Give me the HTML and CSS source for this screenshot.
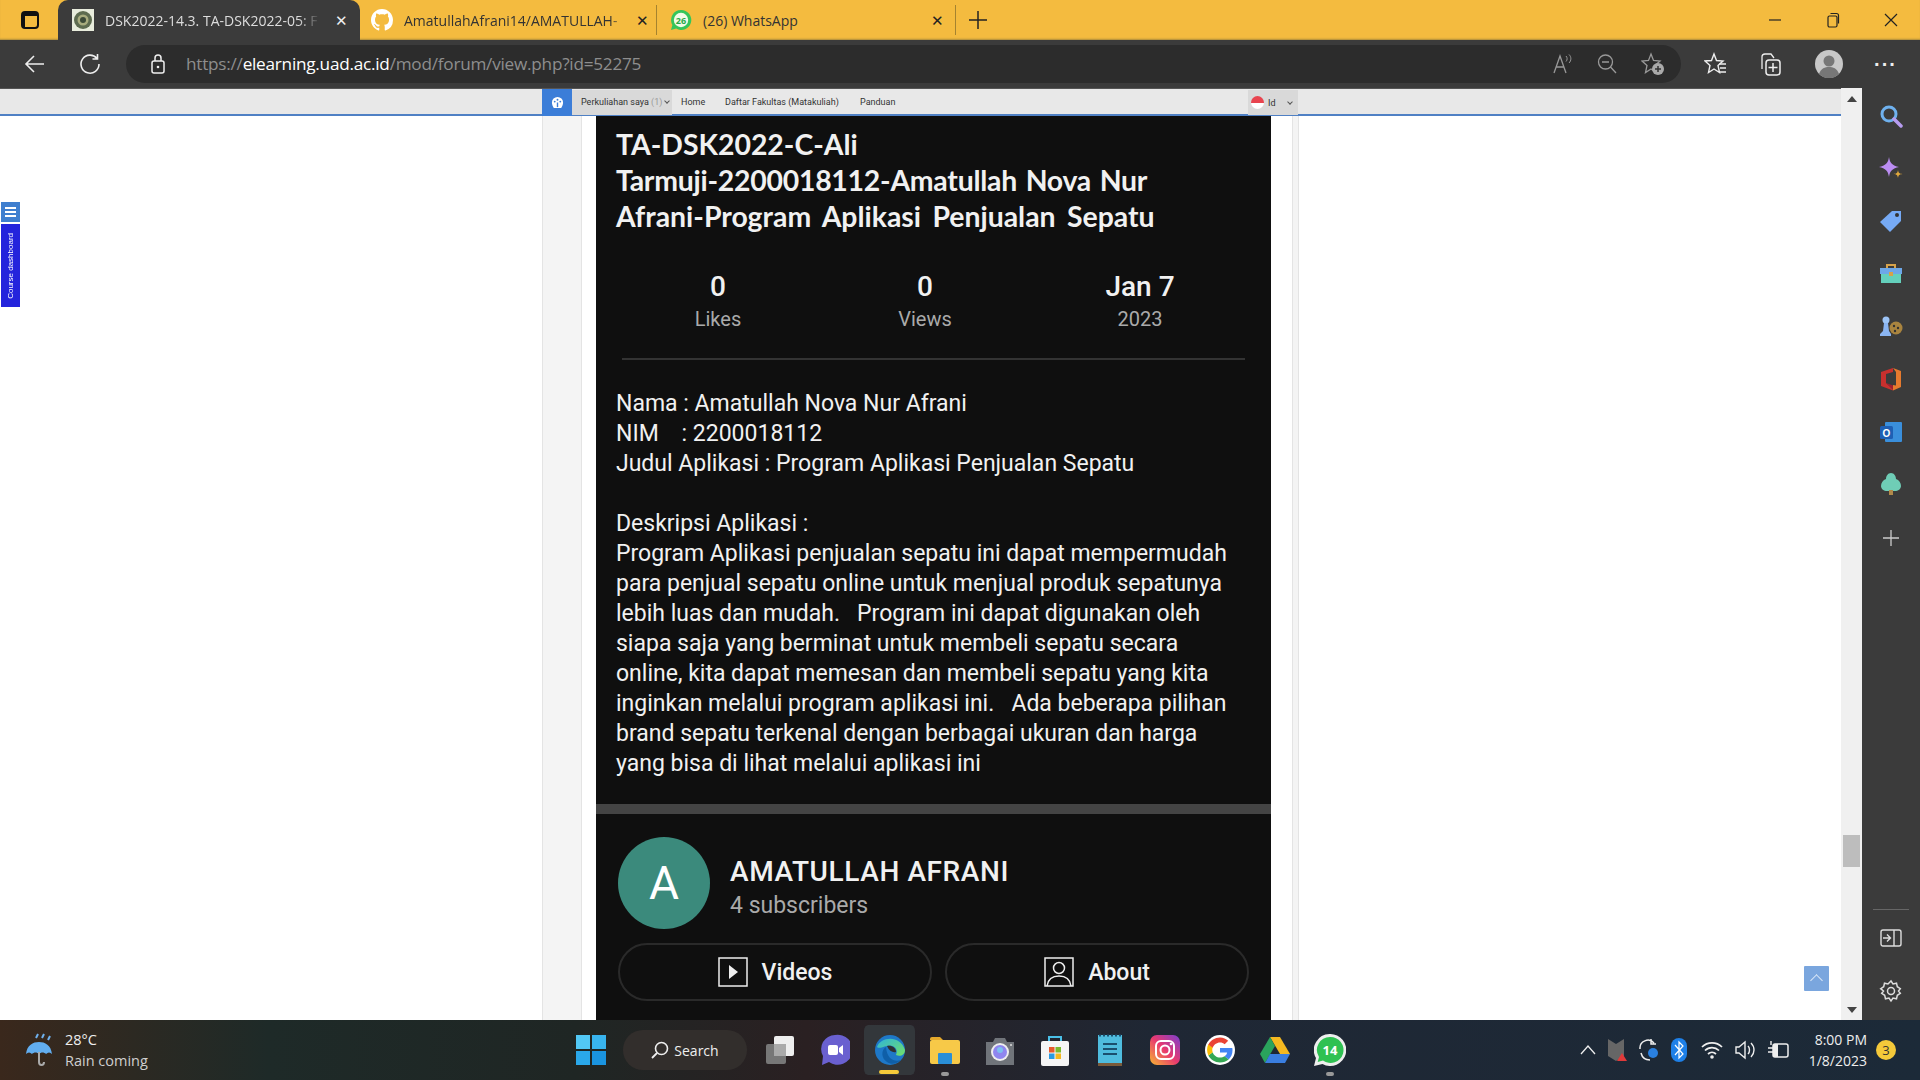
FILE: index.html
```html
<!DOCTYPE html>
<html>

<head>
    <title>DSK2022-14.3. TA-DSK2022-05</title>
    <link rel="stylesheet" href="styles.css">
</head>

<body>
    <header class="tabbar">
        <svg class="tabs-btn" width="20" height="20" viewBox="0 0 20 20"><rect x="2" y="2" width="16" height="16" rx="3" fill="none" stroke="#111" stroke-width="2"/><rect x="2" y="2" width="16" height="4" fill="#111"/><rect x="2" y="2" width="3" height="16" fill="#111"/></svg>
        <div class="tab tab-active">
            <svg class="fav" width="22" height="22" viewBox="0 0 22 22"><rect width="22" height="22" fill="#e8ecdc"/><circle cx="11" cy="11" r="9" fill="#5d6b4f"/><circle cx="11" cy="11" r="5.500" fill="#a8ac7e"/><circle cx="11" cy="11" r="3" fill="#3c4a38"/></svg>
            <span class="tab-title">DSK2022-14.3. TA-DSK2022-05: F</span>
            <span class="tab-x">✕</span>
        </div>
        <div class="tab tab-gh">
            <svg class="fav" width="22" height="22" viewBox="0 0 16 16"><path fill="#fff" d="M8 0C3.58 0 0 3.58 0 8c0 3.54 2.29 6.53 5.47 7.59.4.07.55-.17.55-.38 0-.19-.01-.82-.01-1.49-2.01.37-2.53-.49-2.69-.94-.09-.23-.48-.94-.82-1.13-.28-.15-.68-.52-.01-.53.63-.01 1.08.58 1.23.82.72 1.21 1.87.87 2.33.66.07-.52.28-.87.51-1.07-1.78-.2-3.64-.89-3.64-3.95 0-.87.31-1.59.82-2.15-.08-.2-.36-1.02.08-2.12 0 0 .67-.21 2.2.82.64-.18 1.32-.27 2-.27s1.36.09 2 .27c1.53-1.04 2.2-.82 2.2-.82.44 1.1.16 1.92.08 2.12.51.56.82 1.27.82 2.15 0 3.07-1.87 3.75-3.65 3.95.29.25.54.73.54 1.48 0 1.07-.01 1.93-.01 2.2 0 .21.15.46.55.38A8 8 0 0 0 16 8c0-4.42-3.58-8-8-8z"/></svg>
            <span class="tab-title">AmatullahAfrani14/AMATULLAH-</span>
            <span class="tab-x">✕</span>
        </div>
        <div class="tab tab-wa">
            <svg class="fav" width="22" height="22" viewBox="0 0 22 22"><path fill="#35c55a" d="M11 1a10 10 0 0 0-8.600 15L1 21l5.200-1.400A10 10 0 1 0 11 1z"/><circle cx="11" cy="11" r="7.200" fill="#f3fbe8"/><text x="11" y="14.500" class="fav-num">26</text></svg>
            <span class="tab-title">(26) WhatsApp</span>
            <span class="tab-x">✕</span>
        </div>
        <svg class="new-tab" width="18" height="18" viewBox="0 0 18 18"><path d="M9 0v18M0 9h18" stroke="#222" stroke-width="1.500"/></svg>
        <div class="win-ctrls">
            <svg width="14" height="14" viewBox="0 0 14 14"><path d="M1 7h12" stroke="#222" stroke-width="1.200"/></svg>
            <svg width="14" height="16" viewBox="0 0 14 16"><rect x="2" y="4" width="9" height="11" rx="1.500" fill="none" stroke="#222" stroke-width="1.200"/><path d="M4.500 1.500h6a2 2 0 0 1 2 2v8" fill="none" stroke="#222" stroke-width="1.200"/></svg>
            <svg width="14" height="14" viewBox="0 0 14 14"><path d="M1 1l12 12M13 1L1 13" stroke="#222" stroke-width="1.200"/></svg>
        </div>
    </header>

    <nav class="toolbar">
        <svg class="nav-btn" width="22" height="22" viewBox="0 0 22 22"><path d="M20 11H2M10 3l-8 8 8 8" fill="none" stroke="#eee" stroke-width="1.600"/></svg>
        <svg class="nav-btn" width="22" height="22" viewBox="0 0 22 22"><path d="M18 5.500A9 9 0 1 0 20 11M18.500 1v5h-5" fill="none" stroke="#eee" stroke-width="1.600"/></svg>
        <div class="addr">
            <svg width="16" height="20" viewBox="0 0 16 20"><rect x="2" y="7" width="12" height="12" rx="2" fill="none" stroke="#eee" stroke-width="1.500"/><path d="M5 7V4a3 3 0 0 1 6 0v3" fill="none" stroke="#eee" stroke-width="1.500"/><circle cx="8" cy="13" r="1.300" fill="#eee"/></svg>
            <span class="url"><span class="dim">https://</span>elearning.uad.ac.id<span class="dim">/mod/forum/view.php?id=52275</span></span>
            <div class="addr-icons">
                <svg width="20" height="22" viewBox="0 0 20 22"><path d="M1 20L7 3l6 17M3.500 14h7" fill="none" stroke="#999" stroke-width="1.300"/><path d="M13 3c1.500 1.500 1.500 4 0 5.500M16 1.500c2.500 2.500 2.500 6 0 8.500" fill="none" stroke="#999" stroke-width="1"/></svg>
                <svg width="20" height="22" viewBox="0 0 20 22"><circle cx="8.500" cy="9" r="7" fill="none" stroke="#999" stroke-width="1.300"/><path d="M5 9h7M13.500 14l5.500 6" stroke="#999" stroke-width="1.300"/></svg>
                <svg width="24" height="24" viewBox="0 0 24 24"><path d="M10 2l2.500 6.500L19 9l-5 4.500 1.500 7L10 17l-5.500 3.500 1.500-7L1 9l6.500-.5z" fill="none" stroke="#999" stroke-width="1.300"/><circle cx="17" cy="17" r="6" fill="#aaa"/><path d="M17 14v6M14 17h6" stroke="#333" stroke-width="1.500"/></svg>
            </div>
        </div>
        <div class="tool-icons">
            <svg width="24" height="24" viewBox="0 0 24 24"><path d="M10 2l2.500 6.500L19 9l-5 4.500 1.500 7L10 17l-5.500 3.500 1.500-7L1 9l6.500-.5z" fill="none" stroke="#eee" stroke-width="1.400"/><path d="M15 12h7M16 16h6M15 20h7" stroke="#eee" stroke-width="1.400"/></svg>
            <svg width="24" height="26" viewBox="0 0 24 26"><path d="M4 18V6a3 3 0 0 1 3-3h6l3 4" fill="none" stroke="#eee" stroke-width="1.300"/><rect x="8" y="9" width="14" height="15" rx="3" fill="none" stroke="#eee" stroke-width="1.500"/><path d="M15 12v9M10.500 16.500h9" stroke="#eee" stroke-width="1.500"/></svg>
            <svg class="tool-avatar" width="28" height="28" viewBox="0 0 28 28"><circle cx="14" cy="14" r="14" fill="#c8c8c8"/><circle cx="14" cy="11" r="5.500" fill="#777"/><path d="M4 24c2-6 6-7 10-7s8 1 10 7a14 14 0 0 1-20 0z" fill="#777"/></svg>
            <span class="more">···</span>
        </div>
    </nav>

    <div class="main">
        <div class="page">
            <div class="menu-row">
                <div class="menu-gap"></div>
                <div class="menu">
                    <div class="home-btn">
                        <svg width="13" height="13" viewBox="0 0 14 14"><path fill="#fff" d="M7 1a6 6 0 0 0-6 6c0 2.500 1 4 2 6h8c1-2 2-3.500 2-6a6 6 0 0 0-6-6z"/><circle cx="4" cy="6" r="1" fill="#3b7dd8"/><circle cx="7" cy="4" r="1" fill="#3b7dd8"/><circle cx="10" cy="6" r="1" fill="#3b7dd8"/><path d="M7 7v5" stroke="#3b7dd8" stroke-width="1.500"/></svg>
                    </div>
                    <div class="menu-item menu-open">Perkuliahan saya <span class="count">(1)</span><span class="caret"></span></div>
                    <div class="menu-item">Home</div>
                    <div class="menu-item">Daftar Fakultas (Matakuliah)</div>
                    <div class="menu-item">Panduan</div>
                    <div class="lang">
                        <span class="flag"></span>
                        <span>Id</span>
                        <span class="caret"></span>
                    </div>
                </div>
            </div>
            <div class="content">
                <div class="left-gap"></div>
                <div class="column">
                    <div class="strip"></div>
                    <div class="post-wrap">
                        <article class="post">
                            <h1 class="title">TA-DSK2022-C-Ali<br><span class="title-tight">Tarmuji-2200018112-Amatullah Nova Nur</span><br><span class="title-wide">Afrani-Program Aplikasi Penjualan Sepatu</span></h1>
                            <div class="stats">
                                <div class="stat stat-likes"><b>0</b><span>Likes</span></div>
                                <div class="stat stat-views"><b>0</b><span>Views</span></div>
                                <div class="stat stat-date"><b>Jan 7</b><span>2023</span></div>
                            </div>
                            <hr class="divider">
                            <p class="desc">Nama : Amatullah Nova Nur Afrani<br>NIM &nbsp;&nbsp; : 2200018112<br>Judul Aplikasi : Program Aplikasi Penjualan Sepatu<br><br>Deskripsi Aplikasi :<br>Program Aplikasi penjualan sepatu ini dapat mempermudah<br>para penjual sepatu online untuk menjual produk sepatunya<br>lebih luas dan mudah. &nbsp; Program ini dapat digunakan oleh<br>siapa saja yang berminat untuk membeli sepatu secara<br>online, kita dapat memesan dan membeli sepatu yang kita<br>inginkan melalui program aplikasi ini. &nbsp; Ada beberapa pilihan<br>brand sepatu terkenal dengan berbagai ukuran dan harga<br>yang bisa di lihat melalui aplikasi ini</p>
                            <div class="band"></div>
                            <div class="channel">
                                <div class="avatar">A</div>
                                <div class="chan-info">
                                    <div class="chan-name">AMATULLAH AFRANI</div>
                                    <div class="chan-subs">4 subscribers</div>
                                </div>
                            </div>
                            <div class="chan-btns">
                                <div class="pill pill-videos">
                                    <svg width="30" height="30" viewBox="0 0 30 30"><rect x="1" y="1" width="28" height="28" fill="none" stroke="#eee" stroke-width="1.500"/><path d="M11 8l9 7-9 7z" fill="#eee"/></svg>
                                    Videos
                                </div>
                                <div class="pill pill-about">
                                    <svg width="30" height="30" viewBox="0 0 30 30"><rect x="1" y="1" width="28" height="28" fill="none" stroke="#eee" stroke-width="1.500"/><circle cx="15" cy="11" r="5.500" fill="none" stroke="#eee" stroke-width="1.500"/><path d="M3 29c1-7 6-10 12-10s11 3 12 10" fill="none" stroke="#eee" stroke-width="1.500"/></svg>
                                    About
                                </div>
                            </div>
                        </article>
                    </div>
                    <div class="strip-right"></div>
                </div>
            </div>
            <div class="side-widget">
                <div class="side-toggle"><i></i><i></i><i></i></div>
                <div class="side-dash"><span>Course dashboard</span></div>
            </div>
            <div class="to-top"></div>
        </div>

        <div class="scrollbar">
            <div class="arrow-up"></div>
            <div class="thumb"></div>
            <div class="arrow-down"></div>
        </div>

        <aside class="sidebar">
            <svg width="24" height="24" viewBox="0 0 24 24"><circle cx="10" cy="10" r="7" fill="none" stroke="#6fb1ee" stroke-width="3"/><path d="M15 15l7 7" stroke="#b79cf0" stroke-width="3.500" stroke-linecap="round"/></svg>
            <svg width="24" height="24" viewBox="0 0 24 24"><path d="M10 0c.8 6 3.500 8.500 10 10-6.500 1.500-9.200 4-10 10-.8-6-3.500-8.500-10-10C6.500 8.500 9.200 6 10 0z" fill="#bb8df2"/><path d="M19 13c.5 3 1.200 3.600 4.500 4-3.300.4-4 1-4.500 4-.5-3-1.200-3.600-4.500-4 3.300-.4 4-1 4.500-4z" fill="#e0a83c"/></svg>
            <svg width="24" height="24" viewBox="0 0 24 24"><path d="M1 13L13 2h9v10L11 23z" fill="#76aaf5"/><circle cx="18" cy="6" r="2" fill="#333"/></svg>
            <svg width="24" height="24" viewBox="0 0 24 24"><path d="M8 6V3h8v3" fill="none" stroke="#d6a24a" stroke-width="2"/><rect x="1" y="6" width="22" height="6" fill="#6da7e8"/><rect x="2" y="12" width="20" height="9" fill="#64d0bc"/><rect x="10" y="10" width="4" height="4" fill="#d6a24a"/></svg>
            <svg width="24" height="24" viewBox="0 0 24 24"><circle cx="7" cy="6" r="3.500" fill="#9cc4f7"/><path d="M5 9h4l1 8 2 3v2H1v-2l3-3z" fill="#8ab5f2"/><circle cx="17" cy="14" r="6.500" fill="#a9843f"/><circle cx="15" cy="12" r="1.200" fill="#333"/><circle cx="19" cy="14" r="1.200" fill="#333"/><circle cx="16" cy="17" r="1.200" fill="#333"/></svg>
            <svg width="24" height="24" viewBox="0 0 24 24"><path d="M2 5l12-4v4L7 7v9l7 6.500v1L2 19z" fill="#c8302e"/><path d="M14 1l8 3v16l-8 3.500V18l3 .5V5z" fill="#e67a2e"/><path d="M7 16l7 2.500v4z" fill="#a02030"/></svg>
            <svg width="24" height="24" viewBox="0 0 24 24"><rect x="6" y="2" width="17" height="20" rx="1" fill="#3a8fdc"/><rect x="1" y="6" width="13" height="13" rx="1.500" fill="#1e5fb4"/><text x="7.500" y="16.500" class="outlook-o">O</text></svg>
            <svg width="24" height="24" viewBox="0 0 24 24"><path d="M12 1c3 0 5 3 5 6 3 1 5 4 5 7 0 3-3 5-6 5H8c-3 0-6-2-6-5 0-3 2-6 5-7 0-3 2-6 5-6z" fill="#6fcdb6"/><rect x="10" y="18" width="4" height="5" fill="#b08a4a"/></svg>
            <svg class="side-add" width="20" height="20" viewBox="0 0 20 20"><path d="M10 2v16M2 10h16" stroke="#ccc" stroke-width="1.300"/></svg>
            <div class="side-bottom">
                <hr class="side-rule">
                <svg width="22" height="20" viewBox="0 0 22 20"><rect x="1" y="2" width="20" height="16" rx="2" fill="none" stroke="#ddd" stroke-width="1.400"/><path d="M14 2v16M3 10h7M7 6.500l3.500 3.500L7 13.500" fill="none" stroke="#ddd" stroke-width="1.400"/></svg>
                <svg width="24" height="24" viewBox="0 0 24 24"><path fill="none" stroke="#ddd" stroke-width="1.500" d="M12 2l2 3 3.500-.8.800 3.500 3 2-1.800 2.300 1.800 2.300-3 2-.8 3.500-3.500-.8-2 3-2-3-3.500.8-.8-3.500-3-2 1.800-2.300L1.700 9.700l3-2 .8-3.500L9 5z"/><circle cx="12" cy="12" r="3.500" fill="none" stroke="#ddd" stroke-width="1.500"/></svg>
            </div>
        </aside>
    </div>

    <footer class="taskbar">
        <div class="weather">
            <svg width="32" height="36" viewBox="0 0 32 36"><path d="M2 22C3 13 9 10 15 10s12 3 13 12c-2-2-4-2-6 0-2-2-5-2-7 0-2-2-5-2-7 0-2-2-4-2-6 0z" fill="#62aef0"/><path d="M15 20v10c0 4 5 4 5 0" fill="none" stroke="#aaa" stroke-width="2"/><path d="M14 2l-2 4M20 2l-2 4M26 4l-2 4" stroke="#6fb1ee" stroke-width="2"/></svg>
            <div class="weather-txt">
                <div>28°C</div>
                <div class="weather-sub">Rain coming</div>
            </div>
        </div>
        <div class="apps">
            <svg width="30" height="30" viewBox="0 0 30 30"><rect width="14" height="14" fill="#52c8f5"/><rect x="16" width="14" height="14" fill="#38b4ee"/><rect y="16" width="14" height="14" fill="#2aa8ea"/><rect x="16" y="16" width="14" height="14" fill="#1a94e0"/></svg>
            <div class="search-pill">
                <svg width="18" height="18" viewBox="0 0 18 18"><circle cx="10.500" cy="7.500" r="6" fill="none" stroke="#eee" stroke-width="1.600"/><path d="M6 12l-5 5" stroke="#eee" stroke-width="1.800"/></svg>
                Search
            </div>
            <div class="app-slot">
                <svg width="32" height="32" viewBox="0 0 32 32"><rect x="2" y="10" width="20" height="20" rx="2" fill="#777"/><rect x="10" y="2" width="20" height="20" rx="2" fill="#eee"/><rect x="10" y="10" width="12" height="12" fill="#aaa"/></svg>
            </div>
            <div class="app-slot">
                <svg width="30" height="32" viewBox="0 0 30 32"><path d="M15 1a14 14 0 0 0-12 21l-1 9 7-3a15 15 0 1 0 6-27z" fill="#6a60d0"/><rect x="8" y="11" width="10" height="10" rx="2" fill="#fff"/><path d="M19 14l4-3v10l-4-3z" fill="#fff"/></svg>
            </div>
            <div class="app-slot app-edge">
                <svg width="32" height="32" viewBox="0 0 32 32"><defs><linearGradient id="edg" x1="0" y1="0" x2="1" y2="1"><stop offset="0" stop-color="#2fb4d8"/><stop offset="1" stop-color="#72e068"/></linearGradient></defs><circle cx="16" cy="16" r="15" fill="#1e78c8"/><path d="M3 13C6 3 26 0 31 16c0 5-5 7-9 5 3-6-3-11-9-9-5 1-8 3-10 1z" fill="url(#edg)"/><path d="M13 12c5-1 9 2 9 6-3 1-7-1-9-6z" fill="#2f3133"/><path d="M12 13c-5 3-5 11 1 15 4 3 10 2 14-2-6 2-14 0-15-13z" fill="#0f5fa8"/></svg>
                <span class="run-bar"></span>
            </div>
            <div class="app-slot">
                <svg width="32" height="28" viewBox="0 0 32 28"><path d="M1 3a2 2 0 0 1 2-2h8l3 3h-13z" fill="#e6a92c"/><rect x="1" y="4" width="30" height="24" rx="2" fill="#f7c948"/><rect x="9" y="17" width="14" height="11" rx="1" fill="#2a8fd8"/></svg>
                <span class="run-dot"></span>
            </div>
            <div class="app-slot">
                <svg width="32" height="30" viewBox="0 0 32 30"><path d="M2 7h7l2-4h10l2 4h7v23H2z" fill="#70747a"/><circle cx="16" cy="17" r="9" fill="#eee"/><circle cx="16" cy="17" r="7" fill="#8f86ee"/><circle cx="16" cy="15" r="3" fill="#7cc0f0"/><circle cx="27" cy="10" r="1" fill="#ddd"/></svg>
            </div>
            <div class="app-slot">
                <svg width="30" height="32" viewBox="0 0 30 32"><path d="M9 8V3h12v5" fill="none" stroke="#4ac0e8" stroke-width="2"/><rect x="1" y="7" width="28" height="25" rx="2" fill="#f5f5f5"/><rect x="9" y="13" width="5.500" height="5.500" fill="#e8592b"/><rect x="15.500" y="13" width="5.500" height="5.500" fill="#7ab92c"/><rect x="9" y="19.500" width="5.500" height="5.500" fill="#2a9ae0"/><rect x="15.500" y="19.500" width="5.500" height="5.500" fill="#f4b820"/></svg>
            </div>
            <div class="app-slot">
                <svg width="24" height="32" viewBox="0 0 24 32"><rect y="1" width="24" height="28" fill="#4fbcde"/><rect y="29" width="24" height="3" fill="#7a5a3a"/><path d="M1 1.500h22" stroke="#1a4f6e" stroke-width="2" stroke-dasharray="2 2"/><path d="M5 10h14M5 15h14M5 20h14" stroke="#1a4f6e" stroke-width="2.200"/></svg>
            </div>
            <div class="app-slot">
                <svg width="30" height="30" viewBox="0 0 30 30"><defs><linearGradient id="ig" x1="0" y1="1" x2="1" y2="0"><stop offset="0" stop-color="#f7b733"/><stop offset=".5" stop-color="#e8396f"/><stop offset="1" stop-color="#7a3fd0"/></linearGradient></defs><rect width="30" height="30" rx="7" fill="url(#ig)"/><rect x="6" y="6" width="18" height="18" rx="5" fill="none" stroke="#fff" stroke-width="2"/><circle cx="15" cy="15" r="4.500" fill="none" stroke="#fff" stroke-width="2"/><circle cx="21" cy="9" r="1.300" fill="#fff"/></svg>
            </div>
            <div class="app-slot">
                <svg width="30" height="30" viewBox="0 0 48 48"><circle cx="24" cy="24" r="24" fill="#fff"/><path fill="#4285f4" d="M44 24.500c0-1.500-.1-2.600-.4-3.800H24v7.400h11.500c-.5 2.500-2 4.600-4.300 6l6.600 5.100C41.700 35.600 44 30.500 44 24.500z"/><path fill="#34a853" d="M24 44c5.500 0 10-1.800 13.800-4.800l-6.600-5.100c-1.800 1.200-4.200 2-7.200 2-5.400 0-10-3.600-11.700-8.600l-6.900 5.300C8.800 39.400 15.800 44 24 44z"/><path fill="#fbbc05" d="M12.300 27.500c-.9-2.600-.9-5.400 0-8L5.400 14.200c-2.800 5.600-2.800 12 0 18.600z"/><path fill="#ea4335" d="M24 11.900c3 0 5.500 1 7.500 2.900l5.600-5.600C33.800 6.100 29.400 4 24 4 15.800 4 8.800 8.600 5.400 15.200l6.900 5.300C14 15.500 18.600 11.900 24 11.900z"/></svg>
            </div>
            <div class="app-slot">
                <svg width="30" height="28" viewBox="0 0 30 28"><path d="M10 1h10l10 17h-10z" fill="#f4b820"/><path d="M10 1L0 18l5 9 10-17z" fill="#2aa35c"/><path d="M5 27h20l5-9H10z" fill="#3a7ee0"/></svg>
            </div>
            <div class="app-slot">
                <svg width="32" height="32" viewBox="0 0 32 32"><path fill="#eee" d="M16 0a16 16 0 0 0-14 24L0 32l8.500-2A16 16 0 1 0 16 0z"/><path fill="#2fc152" d="M16 3a13 13 0 0 0-11 20l-1.300 5 5.300-1.400A13 13 0 1 0 16 3z"/><text x="16" y="21" class="wa-num">14</text></svg>
                <span class="run-dot"></span>
            </div>
        </div>
        <div class="tray">
            <svg width="16" height="10" viewBox="0 0 16 10"><path d="M1 9l7-8 7 8" fill="none" stroke="#eee" stroke-width="1.300"/></svg>
            <svg width="20" height="24" viewBox="0 0 20 24"><path d="M1 1l8 5 8-5v17l-8 5-8-5z" fill="#666"/><path d="M10 23l5-8 5 8z" fill="#e03a3a"/></svg>
            <svg width="22" height="24" viewBox="0 0 22 24"><path d="M2 11a8 8 0 0 1 14-6M13 1v5h5M3 15c1 4 3 7 9 7" fill="none" stroke="#eee" stroke-width="1.500"/><circle cx="15" cy="15" r="5" fill="#2a80e0"/></svg>
            <svg width="16" height="24" viewBox="0 0 16 24"><rect width="16" height="24" rx="8" fill="#1e80e8"/><path d="M4 7l8 9-4 4V4l4 4-8 9" fill="none" stroke="#fff" stroke-width="1.200"/></svg>
            <svg class="tray-wifi" width="22" height="20" viewBox="0 0 22 20"><path d="M1 7a14 14 0 0 1 20 0M4 10.500a10 10 0 0 1 14 0M7 14a6 6 0 0 1 8 0" fill="none" stroke="#eee" stroke-width="1.700"/><circle cx="11" cy="17" r="1.800" fill="#eee"/></svg>
            <svg width="22" height="20" viewBox="0 0 22 20"><path d="M2 7h3l6-5v16l-6-5H2z" fill="none" stroke="#eee" stroke-width="1.400"/><path d="M14 6c2 2 2 6 0 8M17 3c4 4 4 10 0 14" fill="none" stroke="#eee" stroke-width="1.400"/></svg>
            <svg width="22" height="20" viewBox="0 0 22 20"><rect x="6" y="4" width="15" height="13" rx="2" fill="none" stroke="#eee" stroke-width="1.500"/><rect x="6" y="4" width="5" height="13" fill="#eee"/><path d="M1 8h5M1 12h5M4 1v4" stroke="#eee" stroke-width="1.400"/></svg>
            <div class="clock"><div>8:00 PM</div><div>1/8/2023</div></div>
            <div class="notif">3</div>
        </div>
    </footer>
</body>

</html>
```

FILE: styles.css
```css
* { box-sizing: border-box; }
html, body { margin: 0; padding: 0; }
body { width: 1920px; height: 1080px; overflow: hidden; display: flex; flex-direction: column; font-family: "Roboto", sans-serif; background: #fff; }

/* window title strip */
.tabbar { height: 40px; flex: none; background: #f4bb3f; display: flex; align-items: stretch; box-shadow: inset 0 -2px 2px -1px #a98a3c; }
.tabs-btn { margin: 10px 0 0 20px; }
.tab { display: flex; align-items: center; font-family: "Open Sans", sans-serif; font-size: 14px; color: #333; position: relative; }
.tab-title { white-space: nowrap; overflow: hidden; }
.tab-x { font-size: 15px; color: #222; }
.fav { flex: none; }
.fav-num { font: bold 9px "Open Sans", sans-serif; fill: #28a84a; text-anchor: middle; }
.tab-active { width: 302px; margin-left: 18px; padding-left: 14px; background: #3b3b3b; color: #ddd; border-radius: 10px 10px 0 0; }
.tab-active .tab-title { width: 215px; margin-left: 11px; -webkit-mask-image: linear-gradient(90deg, #000 90%, transparent); }
.tab-active .tab-x { color: #eee; margin-left: 15px; }
.tab-gh { width: 297px; padding-left: 11px; border-right: 1px solid #a5832f; height: 30px; margin-top: 5px; }
.tab-gh .tab-title { width: 222px; margin-left: 11px; -webkit-mask-image: linear-gradient(90deg, #000 93%, transparent); }
.tab-gh .tab-x { margin-left: 10px; }
.tab-wa { width: 299px; padding-left: 13px; border-right: 1px solid #a5832f; height: 30px; margin-top: 5px; }
.tab-wa .tab-title { width: 228px; margin-left: 11px; }
.new-tab { margin: 11px 0 0 13px; }
.win-ctrls { margin-left: auto; margin-right: 22px; display: flex; gap: 44px; align-items: center; }

/* address row */
.toolbar { height: 48px; flex: none; background: #3b3b3b; display: flex; align-items: center; }
.nav-btn { margin-left: 24px; }
.nav-btn + .nav-btn { margin-left: 33px; }
.addr { width: 1555px; height: 38px; margin-left: 25px; background: #2c2c2c; border-radius: 19px; display: flex; align-items: center; padding-left: 24px; }
.url { margin-left: 20px; margin-top: -2px; font-family: "Open Sans", sans-serif; font-size: 17.200px; letter-spacing: -0.25px; color: #fff; }
.dim { color: #8e8e8e; }
.addr-icons { margin-left: auto; margin-right: 16px; display: flex; align-items: center; gap: 24px; }
.tool-icons { display: flex; align-items: center; margin-left: 23px; gap: 30px; }
.tool-avatar { margin-left: 3px; }
.more { color: #eee; font: bold 20px "Liberation Sans", sans-serif; margin-left: 1px; letter-spacing: 1px; }

/* page + browser chrome */
.main { flex: 1; display: flex; min-height: 0; }
.page { width: 1841px; flex: none; position: relative; display: flex; flex-direction: column; overflow: hidden; border-top: 1px solid #555; }
.menu-row { height: 27px; flex: none; display: flex; background: #e8e8e8; border-bottom: 2px solid #4f80c4; }
.menu-gap { width: 542px; flex: none; }
.menu { width: 756px; flex: none; display: flex; align-items: center; font-size: 9px; color: #333; height: 27px; }
.home-btn { width: 30px; height: 27px; background: #3b7dd8; display: flex; align-items: center; justify-content: center; }
.menu-item { height: 25px; line-height: 24px; padding: 0 9px; white-space: nowrap; }
.menu-open { width: 100px; background: #d9d9d9; }
.menu-item:nth-child(3) { width: 44px; }
.menu-item:nth-child(4) { width: 135px; }
.count { color: #999; }
.caret { display: inline-block; width: 4px; height: 4px; border-right: 1px solid #555; border-bottom: 1px solid #555; transform: rotate(45deg); margin: 0 0 2px 3px; }
.lang { margin-left: auto; width: 50px; height: 25px; background: #d9d9d9; display: flex; align-items: center; padding-left: 3px; gap: 4px; }
.lang .caret { margin-left: 8px; }
.flag { width: 13px; height: 13px; border-radius: 50%; background: linear-gradient(#e8444f 50%, #fff 50%); }

.content { flex: 1; display: flex; min-height: 0; background: #fff; }
.left-gap { width: 542px; flex: none; }
.column { width: 757px; flex: none; display: flex; border-left: 1px solid #e4e4e4; border-right: 1px solid #e4e4e4; }
.strip { width: 39px; flex: none; background: #f4f4f4; border-right: 1px solid #e4e4e4; }
.post-wrap { width: 711px; padding: 0 0 0 14px; border-right: 1px solid #e4e4e4; flex: none; overflow: hidden; }
.strip-right { flex: 1; background: #f4f4f4; }
.post { width: 675px; height: 904px; background: #0f0f0f; color: #f1f1f1; display: flex; flex-direction: column; }

.title { margin: 10px 0 0 20px; font-family: "Lato", sans-serif; font-weight: 700; font-size: 28.400px; line-height: 36px; word-spacing: 2px; color: #f1f1f1; }
.title-tight { letter-spacing: -0.24px; }
.title-wide { word-spacing: 4.500px; }
.stats { display: flex; margin-top: 33px; height: 64px; }
.stat { display: flex; flex-direction: column; align-items: center; }
.stat b { font-size: 28px; line-height: 39px; font-weight: 500; color: #f1f1f1; }
.stat span { font-size: 20px; line-height: 26px; color: #aaa; }
.stat-likes { width: 244px; }
.stat-views { width: 170px; }
.stat-date { width: 260px; }
.divider { margin: 27px 0 0 26px; width: 623px; height: 2px; border: 0; background: #333; }
.desc { margin: 29px 0 0 20px; font-size: 23px; line-height: 30px; color: #f1f1f1; white-space: nowrap; }
.band { height: 10px; background: #444; margin-top: 25px; flex: none; }
.channel { display: flex; align-items: center; margin: 23px 0 0 22px; gap: 20px; }
.avatar { width: 92px; height: 92px; border-radius: 50%; background: #3b8a7c; color: #fff; font-size: 46px; display: flex; align-items: center; justify-content: center; }
.chan-info { padding-top: 12px; }
.chan-name { font-weight: 500; font-size: 28px; line-height: 34px; letter-spacing: 0.6px; color: #f1f1f1; }
.chan-subs { font-size: 23px; line-height: 34px; color: #aaa; }
.chan-btns { display: flex; gap: 13px; margin: 14px 0 0 22px; }
.pill { height: 58px; border: 2px solid #2a2a2a; border-radius: 29px; display: flex; align-items: center; justify-content: center; gap: 14px; font-size: 23px; font-weight: 500; color: #f1f1f1; }
.pill-videos { width: 314px; }
.pill-about { width: 304px; }

/* floating page widgets */
.side-widget { position: absolute; left: 0; top: 113px; width: 20px; }
.side-toggle { width: 19px; height: 20px; margin-left: 1px; background: #3f7fcf; display: flex; flex-direction: column; justify-content: center; gap: 2px; padding: 0 4px; }
.side-toggle i { display: block; height: 2px; background: #fff; }
.side-dash { width: 19px; height: 83px; margin-top: 2px; margin-left: 1px; background: #2424dc; display: flex; align-items: center; justify-content: center; }
.side-dash span { writing-mode: vertical-rl; transform: rotate(180deg); font: 8px "Liberation Sans", sans-serif; color: #fff; white-space: nowrap; }
.to-top { position: absolute; left: 1804px; top: 877px; width: 25px; height: 25px; background: #7aa6de; border-radius: 1px; }
.to-top::after { content: ""; position: absolute; left: 8px; top: 10px; width: 8px; height: 8px; border-left: 1.500px solid #dbe8f8; border-top: 1.500px solid #dbe8f8; transform: rotate(45deg); }

.scrollbar { width: 21px; flex: none; background: #f0f0f0; position: relative; display: flex; flex-direction: column; align-items: center; }
.arrow-up { margin-top: 8px; border: 5px solid transparent; border-top: 0; border-bottom: 6px solid #444; }
.thumb { position: absolute; top: 747px; left: 2px; width: 17px; height: 32px; background: #bdbdbd; }
.arrow-down { margin-top: auto; margin-bottom: 7px; border: 5px solid transparent; border-bottom: 0; border-top: 6px solid #444; }

.sidebar { width: 58px; flex: none; background: #3b3b3b; display: flex; flex-direction: column; align-items: center; padding-top: 16px; gap: 28.600px; }
.side-add { margin-top: 3px; }
.outlook-o { font: bold 10px "Liberation Sans", sans-serif; fill: #fff; text-anchor: middle; }
.side-bottom { margin-top: auto; display: flex; flex-direction: column; align-items: center; gap: 31px; padding-bottom: 17px; }
.side-rule { width: 36px; height: 1px; margin: 0 0 -13px; border: 0; background: #666; }

/* windows taskbar */
.taskbar { height: 60px; flex: none; display: flex; align-items: center; position: relative; color: #eee; background: linear-gradient(90deg, #3a281c 0, #1e2a28 14%, #1f2624 30%, #2a2022 42%, #1f2734 60%, #1c2a38 100%); }
.weather { display: flex; align-items: center; margin-left: 24px; gap: 9px; width: 552px; flex: none; font-family: "Open Sans", sans-serif; font-size: 14.500px; line-height: 21px; }
.weather-sub { color: #cfcfcf; }
.apps { display: flex; align-items: center; }
.search-pill { width: 124px; height: 40px; margin: 0 5px 0 17px; border-radius: 20px; background: #322e2c; font-family: "Open Sans", sans-serif; font-size: 14px; display: flex; align-items: center; justify-content: center; gap: 5px; }
.app-slot { width: 55px; height: 50px; flex: none; display: flex; align-items: center; justify-content: center; position: relative; }
.app-edge { border-left: 2.500px solid transparent; border-right: 2.500px solid transparent; background: #33373b; background-clip: padding-box; border-radius: 6px; }
.run-bar { position: absolute; bottom: 1px; left: 15px; width: 20px; height: 4px; background: #f4c93a; border-radius: 2px; }
.run-dot { position: absolute; bottom: -1px; left: 24px; width: 8px; height: 4px; background: #999; border-radius: 2px; }
.wa-num { font: bold 13px "Open Sans", sans-serif; fill: #fff; text-anchor: middle; }
.tray { position: absolute; right: 0; top: 0; height: 60px; display: flex; align-items: center; gap: 11px; padding-right: 24px; }
.tray-wifi { margin-left: 3px; }
.clock { width: 67px; text-align: right; font-family: "Open Sans", sans-serif; font-size: 14px; line-height: 21px; }
.notif { width: 20px; height: 20px; margin-left: -2px; border-radius: 50%; background: #f4c93a; color: #333; font: 13px/20px "Open Sans", sans-serif; text-align: center; }
```
